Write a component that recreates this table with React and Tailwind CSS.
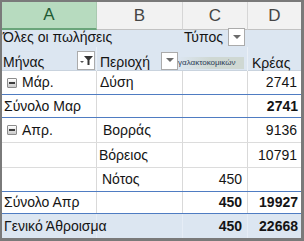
import React from 'react';

const cols = 'grid grid-cols-[95px_86px_65px_53px]';

// small collapse box drawn in front of month names
const MinusBox = () => (
  <span className="inline-flex items-center justify-center w-[10px] h-[10px] border border-[#8c8c8c] bg-gradient-to-b from-white to-[#c9c9c9] rounded-[1px]">
    <span className="block w-[6px] h-[2px] bg-[#3d3d3d]" />
  </span>
);

const DropButton = ({ className = '' }) => (
  <span className={`inline-flex items-center justify-center w-[17px] h-[18px] bg-white border border-[#ababab] ${className}`}>
    <svg width="8" height="5" viewBox="0 0 8 5">
      <path d="M0 0h8L4 4z" fill="#6b6b6b" />
    </svg>
  </span>
);

const FilterButton = () => (
  <span className="inline-flex items-center justify-center w-[18px] h-[19px] bg-white border border-[#ababab]">
    <svg width="13" height="11" viewBox="0 0 13 11">
      <path d="M4 1h9L9.5 5v5L7.5 10V5z" fill="#333" />
      <path d="M0 6h4L2 8z" fill="#555" />
    </svg>
  </span>
);

const Row = ({ h, line = 'border-[#dcdcdc]', bg = '', children }) => (
  <div className={`${cols} ${h} border-b ${line} ${bg}`}>{children}</div>
);

const Cell = ({ className = '', children }) => (
  <div className={`flex items-center whitespace-nowrap ${className}`}>{children}</div>
);

const App = () => {
  return (
    <div className="w-[304px] h-[241px] overflow-hidden bg-white border-2 border-r-[3px] border-b-[3px] border-[#7a7a7a] font-['Liberation_Sans',Arial,sans-serif] text-[14px] text-[#141414]">
      {/* Column letters */}
      <div className={`${cols} h-[22px] text-[17px] text-[#454545]`}>
        <Cell className="justify-center bg-[#b7dbbf] text-[#1f5a33] border-r border-[#a9c9b0] border-b-2 border-b-[#6aa57a]">A</Cell>
        <Cell className="justify-center bg-[#f2f2f2] border-r border-[#d6d6d6] border-b border-b-[#c2c2c2]">B</Cell>
        <Cell className="justify-center bg-[#f2f2f2] border-r border-[#d6d6d6] border-b border-b-[#c2c2c2]">C</Cell>
        <Cell className="justify-center bg-[#f2f2f2] border-b border-b-[#c2c2c2]">D</Cell>
      </div>

      {/* Pivot header */}
      <div className={`${cols} h-[23px] bg-[#dce6f1]`}>
        <Cell className="pl-[1px] pt-[3px] overflow-visible">Όλες οι πωλήσεις</Cell>
        <Cell />
        <Cell className="justify-end pr-[3px] pt-[2px] gap-[5px]">
          <span>Τύπος</span>
          <DropButton />
        </Cell>
        <Cell />
      </div>
      <div className={`${cols} h-[24px] bg-[#dce6f1] border-b border-[#c9d3de]`}>
        <Cell className="justify-between pl-[1px] pr-[1px] border-r border-[#eaf0f7]">
          <span className="pt-[4px]">Μήνας</span>
          <FilterButton />
        </Cell>
        <Cell className="justify-between pl-[3px] pr-[5px]">
          <span className="pt-[4px]">Περιοχή</span>
          <DropButton />
        </Cell>
        <Cell className="pt-[4px] border-r border-[#eaf0f7]">
          <span className="-ml-[5px] text-[8px] text-[#2a3a55] bg-gradient-to-r from-transparent via-[#cfd8d3] to-[#cfd8d3] pr-[8px]">γαλακτοκομικών</span>
        </Cell>
        <Cell className="pl-[4px] pt-[6px]">Κρέας</Cell>
      </div>

      {/* Μάρ. */}
      <Row h="h-[24px]" line="border-[#4f7cc2]">
        <Cell className="pl-[5px] gap-[5px] border-r border-[#d9d9d9]">
          <MinusBox />
          <span>Μάρ.</span>
        </Cell>
        <Cell className="pl-[3px] border-r border-[#d9d9d9]">Δύση</Cell>
        <Cell className="border-r border-[#d9d9d9]" />
        <Cell className="justify-end pr-[4px]">2741</Cell>
      </Row>
      <Row h="h-[23px]" line="border-[#4f7cc2]">
        <Cell className="pl-[2px] border-r border-[#d9d9d9]">Σύνολο Μαρ</Cell>
        <Cell className="border-r border-[#d9d9d9]" />
        <Cell className="border-r border-[#d9d9d9]" />
        <Cell className="justify-end pr-[3px] font-bold">2741</Cell>
      </Row>

      {/* Απρ. */}
      <Row h="h-[25px]">
        <Cell className="pl-[5px] gap-[5px] border-r border-[#d9d9d9]">
          <MinusBox />
          <span>Απρ.</span>
        </Cell>
        <Cell className="pl-[6px] border-r border-[#d9d9d9]">Βορράς</Cell>
        <Cell className="border-r border-[#d9d9d9]" />
        <Cell className="justify-end pr-[4px]">9136</Cell>
      </Row>
      <Row h="h-[25px]">
        <Cell className="border-r border-[#d9d9d9]" />
        <Cell className="pl-[2px] border-r border-[#d9d9d9]">Βόρειος</Cell>
        <Cell className="border-r border-[#d9d9d9]" />
        <Cell className="justify-end pr-[4px]">10791</Cell>
      </Row>
      <Row h="h-[24px]" line="border-[#4f7cc2]">
        <Cell className="border-r border-[#d9d9d9]" />
        <Cell className="pl-[5px] border-r border-[#d9d9d9]">Νότος</Cell>
        <Cell className="justify-end pr-[5px] border-r border-[#d9d9d9]">450</Cell>
        <Cell />
      </Row>
      <Row h="h-[22px]" line="border-[#4f7cc2]">
        <Cell className="pl-[2px] border-r border-[#d9d9d9]">Σύνολο Απρ</Cell>
        <Cell className="border-r border-[#d9d9d9]" />
        <Cell className="justify-end pr-[5px] font-bold border-r border-[#d9d9d9]">450</Cell>
        <Cell className="justify-end pr-[3px] font-bold">19927</Cell>
      </Row>

      {/* Grand total */}
      <div className={`${cols} h-[24px] bg-[#dce6f1]`}>
        <Cell className="pl-[2px] border-r border-[#e6edf6]">Γενικό Άθροισμα</Cell>
        <Cell className="border-r border-[#e6edf6]" />
        <Cell className="justify-end pr-[5px] font-bold border-r border-[#e6edf6]">450</Cell>
        <Cell className="justify-end pr-[3px] font-bold">22668</Cell>
      </div>
    </div>
  );
};

export default App;
